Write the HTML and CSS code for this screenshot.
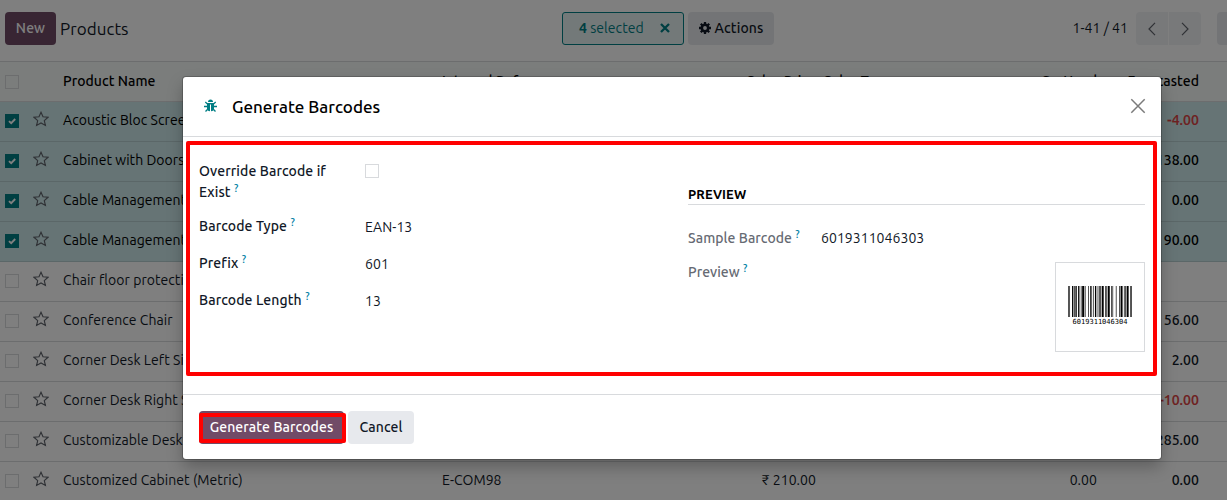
FILE: index.html
```html
<!DOCTYPE html>
<html lang="en">
<head>
<meta charset="utf-8">
<title>Products</title>
<link rel="stylesheet" href="styles.css">
</head>
<body>
<svg class="defs" width="0" height="0">
  <symbol id="star" viewBox="0 0 16 16"><path d="M8 1.3l2 4.500 5 .500-3.700 3.300 1.100 4.800L8 11.900 3.600 14.400l1.100-4.800L1 6.300l5-.500z" fill="none" stroke="currentColor" stroke-width="1.150"/></symbol>
  <symbol id="tick" viewBox="0 0 14 14"><path d="M4 7.100l2.200 2.100L10.200 5" fill="none" stroke="#fff" stroke-width="1.900"/></symbol>
</svg>
<div class="page">
  <header class="control">
    <button class="btn primary new">New</button>
    <span class="crumb">Products</span>
    <div class="selection"><span><b>4</b> selected</span>
      <svg width="10" height="10" viewBox="0 0 10 10"><path d="M1 1l8 8M9 1L1 9" stroke="currentColor" stroke-width="2.300"/></svg>
    </div>
    <button class="btn light actions">
      <svg width="12" height="12" viewBox="0 0 12 12"><circle cx="6" cy="6" r="3.200" fill="none" stroke="currentColor" stroke-width="2.600"/><path d="M6 0v2.500M6 9.500V12M0 6h2.500M9.500 6H12M1.800 1.800l1.700 1.700M8.500 8.500l1.700 1.700M10.200 1.800L8.500 3.500M3.500 8.500l-1.700 1.700" stroke="currentColor" stroke-width="2.300"/></svg>
      <span>Actions</span>
    </button>
    <span class="count">1-41 / 41</span>
    <div class="pager">
      <span><svg width="8" height="14" viewBox="0 0 8 14"><path d="M7 .8L1 7l6 6.200" fill="none" stroke="currentColor" stroke-width="1.200"/></svg></span>
      <span><svg width="8" height="14" viewBox="0 0 8 14"><path d="M1 .8L7 7l-6 6.200" fill="none" stroke="currentColor" stroke-width="1.200"/></svg></span>
    </div>
    <div class="view"></div>
  </header>
  <div class="row head"><i class="box"></i><span></span><span>Product Name</span><span>Internal Reference</span><span class="num">Sales Price</span><span class="tax">Sales Taxes</span><span class="num">On Hand</span><span class="num">Forecasted</span></div>
  <div class="row on"><i class="box"><svg><use href="#tick"/></svg></i><svg class="star"><use href="#star"/></svg><span>Acoustic Bloc Screens</span><span></span><span></span><span></span><span></span><span class="num fc neg">-4.00</span></div>
  <div class="row on"><i class="box"><svg><use href="#tick"/></svg></i><svg class="star"><use href="#star"/></svg><span>Cabinet with Doors</span><span></span><span></span><span></span><span></span><span class="num fc">138.00</span></div>
  <div class="row on"><i class="box"><svg><use href="#tick"/></svg></i><svg class="star"><use href="#star"/></svg><span>Cable Management Box</span><span></span><span></span><span></span><span></span><span class="num fc">0.00</span></div>
  <div class="row on"><i class="box"><svg><use href="#tick"/></svg></i><svg class="star"><use href="#star"/></svg><span>Cable Management Box</span><span></span><span></span><span></span><span></span><span class="num fc">90.00</span></div>
  <div class="row"><i class="box"></i><svg class="star"><use href="#star"/></svg><span>Chair floor protection</span></div>
  <div class="row"><i class="box"></i><svg class="star"><use href="#star"/></svg><span>Conference Chair</span><span></span><span></span><span></span><span></span><span class="num fc">56.00</span></div>
  <div class="row"><i class="box"></i><svg class="star"><use href="#star"/></svg><span>Corner Desk Left Sit</span><span></span><span></span><span></span><span></span><span class="num fc">2.00</span></div>
  <div class="row"><i class="box"></i><svg class="star"><use href="#star"/></svg><span>Corner Desk Right Sit</span><span></span><span></span><span></span><span></span><span class="num fc neg">-10.00</span></div>
  <div class="row"><i class="box"></i><svg class="star"><use href="#star"/></svg><span>Customizable Desk</span><span></span><span></span><span></span><span></span><span class="num fc">285.00</span></div>
  <div class="row"><i class="box"></i><svg class="star"><use href="#star"/></svg><span>Customized Cabinet (Metric)</span><span>E-COM98</span><span class="num">₹ 210.00</span><span></span><span class="num">0.00</span><span class="num fc">0.00</span></div>
</div>
<div class="backdrop">
  <section class="modal">
    <header class="modal-head">
      <svg class="bug" width="13" height="14" viewBox="0 0 13 14"><path d="M4 3a2.500 2.500 0 0 1 5 0z" fill="currentColor"/><path d="M3 4h7v5.500Q10 12 7 12.300V5.500H6v6.800Q3 12 3 9.500z" fill="currentColor"/><path d="M1.300 3l2.200 2M11.700 3L9.500 5M0 7.500h3M10 7.500h3M1.500 12.500l2.200-2.300M11.500 12.500L9.300 10.200" stroke="currentColor" stroke-width="1.300"/></svg>
      <h1>Generate Barcodes</h1>
      <svg class="close" width="16" height="16" viewBox="0 0 16 16"><path d="M1.300 1.300l13.400 13.400M14.700 1.300L1.300 14.700" stroke="currentColor" stroke-width="1.500"/></svg>
    </header>
    <div class="modal-body">
      <div class="frame">
        <div class="fields">
          <label>Override Barcode if<br>Exist <sup>?</sup></label><span><i class="box"></i></span>
          <label>Barcode Type <sup>?</sup></label><span>EAN-13</span>
          <label>Prefix <sup>?</sup></label><span>601</span>
          <label>Barcode Length <sup>?</sup></label><span>13</span>
        </div>
        <div class="preview">
          <h2>PREVIEW</h2>
          <div class="sample"><label>Sample Barcode <sup>?</sup></label><span>6019311046303</span></div>
          <div class="picture"><label>Preview <sup>?</sup></label>
            <div class="card">
              <svg width="64" height="31" viewBox="0 0 95 31" preserveAspectRatio="none"><path d="M0 0h1v31h-1zM2 0h1v31h-1zM6 0h2v31h-2zM9 0h1v31h-1zM11 0h2v31h-2zM15 0h2v31h-2zM19 0h1v31h-1zM21 0h3v31h-3zM25 0h1v31h-1zM30 0h1v31h-1zM33 0h2v31h-2zM37 0h1v31h-1zM40 0h2v31h-2zM44 0h1v31h-1zM46 0h1v31h-1zM48 0h1v31h-1zM50 0h3v31h-3zM55 0h1v31h-1zM57 0h1v31h-1zM59 0h3v31h-3zM64 0h1v31h-1zM66 0h1v31h-1zM71 0h1v31h-1zM76 0h1v31h-1zM78 0h3v31h-3zM83 0h1v31h-1zM85 0h1v31h-1zM87 0h3v31h-3zM92 0h1v31h-1zM94 0h1v31h-1z"/></svg>
              <span>6019311046304</span>
            </div>
          </div>
        </div>
      </div>
    </div>
    <footer class="modal-foot">
      <button class="btn primary generate">Generate Barcodes</button>
      <button class="btn light cancel">Cancel</button>
    </footer>
  </section>
</div>
</body>
</html>
```
FILE: styles.css
```css
* { box-sizing: border-box; }
body { margin: 0; height: 500px; overflow: hidden; background: #fff; color: #111827; font: 14px/20px Ubuntu, "Noto Sans", sans-serif; letter-spacing: .05px; }
.defs { position: absolute; }
.page { width: 1227px; height: 500px; overflow: hidden; }
.btn { height: 33px; border: 0; border-radius: 4px; font: inherit; font-weight: 500; letter-spacing: .1px; display: flex; align-items: center; justify-content: center; padding: 0; flex: none; white-space: nowrap; }
.primary { background: #714b67; color: #fff; }
.light { background: #e7e9ed; color: #111827; }

.control { height: 62px; padding: 12px 0 0 5px; border-bottom: 1px solid #d8dadd; display: flex; align-items: flex-start; }
.new { width: 51px; padding-bottom: 1px; }
.crumb { width: 506px; flex: none; padding-left: 4px; font-size: 17px; line-height: 34px; letter-spacing: .05px; }
.selection { width: 122px; height: 33px; flex: none; margin-right: 4px; padding: 0 13px 0 16px; display: flex; align-items: center; justify-content: space-between; border: 1px solid #017e84; border-radius: 3px; background: #e6f2f3; color: #017e84; }
.selection span { padding-bottom: 1px; }
.selection svg { margin-top: -1px; }
.actions { width: 86px; gap: 4px; padding-bottom: 1px; }
.count { width: 362px; flex: none; padding-right: 8px; line-height: 32px; text-align: right; }
.pager { display: flex; gap: 1px; width: 65px; height: 33px; color: #5f636b; flex: none; }
.pager span { flex: 1; background: #f1f2f5; display: grid; place-items: center; border-radius: 4px 0 0 4px; }
.pager span + span { border-radius: 0 4px 4px 0; }
.view { width: 30px; height: 33px; margin-left: 16px; background: #e7e9ed; border-radius: 4px; flex: none; }

.row { display: grid; grid-template-columns: 28px 30px 379px 294px 80px 120px 161px 102px; padding: 0 0 2px 5px; height: 40px; align-items: center; border-bottom: 1px solid #d8dadd; white-space: nowrap; }
.row > span { padding-bottom: 2px; }
.head { background: #f7faf9; color: #000; font-weight: 500; padding-bottom: 0; }
.on { background: #cce8ea; border-color: #b7cfd0; color: #000; }
.num { text-align: right; }
.tax { padding-left: 8px; }
.fc { font-weight: 500; }
.neg { color: #dc4040; -webkit-text-stroke: .2px; }
.box { display: block; width: 14px; height: 14px; border: 1px solid #d8dadd; }
.row .box { margin-top: 1px; }
.on .box { background: #017e84; border: 0; }
.box svg { display: block; width: 14px; height: 14px; }
.star { width: 16px; height: 16px; color: #5f636b; margin-top: -3px; }

.backdrop { position: absolute; inset: 0; padding: 77px 0 0 183px; background: rgba(0, 0, 0, .5); }
.modal { width: 978px; height: 382px; background: #fff; border-radius: 3px; box-shadow: 0 0 0 1px rgba(0, 0, 0, .2), 0 8px 16px rgba(0, 0, 0, .25); }
.modal-head { height: 60px; padding: 0 15px 0 21px; display: flex; align-items: center; border-bottom: 1px solid #d8dadd; color: #017e84; }
.bug { margin-top: -1px; }
h1 { flex: 1; margin: 0 0 0 15px; color: #000; font-size: 17px; font-weight: 500; line-height: 24px; letter-spacing: 0; }
.close { color: #7b7b7b; margin-top: -2px; }
.modal-body { height: 258px; padding: 4px 4px 0 3px; border-bottom: 1px solid #d8dadd; }
.frame { height: 235px; border: 4px solid red; border-radius: 2px; padding: 16px 8px 0 9px; display: flex; justify-content: space-between; }
.fields { display: grid; grid-template-columns: 166px 200px; grid-template-rows: 55px 37px 37px 37px; line-height: 21px; }
.fields label { font-weight: 500; letter-spacing: .1px; }
.fields span { padding-top: 1px; }
.fields .box { margin-top: 2px; }
sup { color: #0180a5; font-size: 10.500px; line-height: 0; vertical-align: 5px; font-weight: 500; }
.preview { width: 457px; }
h2 { margin: 24px 0 0; height: 20px; border-bottom: 1px solid #d8dadd; color: #000; font-size: 13px; line-height: 19px; font-weight: 700; letter-spacing: .1px; }
.preview label { color: #666a73; font-weight: 500; }
.sample { display: grid; grid-template-columns: 133px 1fr; margin-top: 23px; }
.picture { display: flex; justify-content: space-between; margin-top: 14px; }
.card { width: 90px; height: 90px; border: 1px solid #d8dadd; display: flex; flex-direction: column; align-items: center; padding-top: 23px; color: #000; }
.card svg { display: block; flex: none; }
.card span { font: 7px/10px "DejaVu Sans Mono", monospace; letter-spacing: 0; }
.modal-foot { height: 64px; padding: 16px 16px; display: flex; gap: 4px; }
.modal-foot .btn { padding-bottom: 1px; }
.generate { width: 145px; position: relative; }
.generate::after { content: ""; position: absolute; inset: 2px -2px 1px 0; border: 4px solid red; border-radius: 2px; }
.cancel { width: 66px; }
```
